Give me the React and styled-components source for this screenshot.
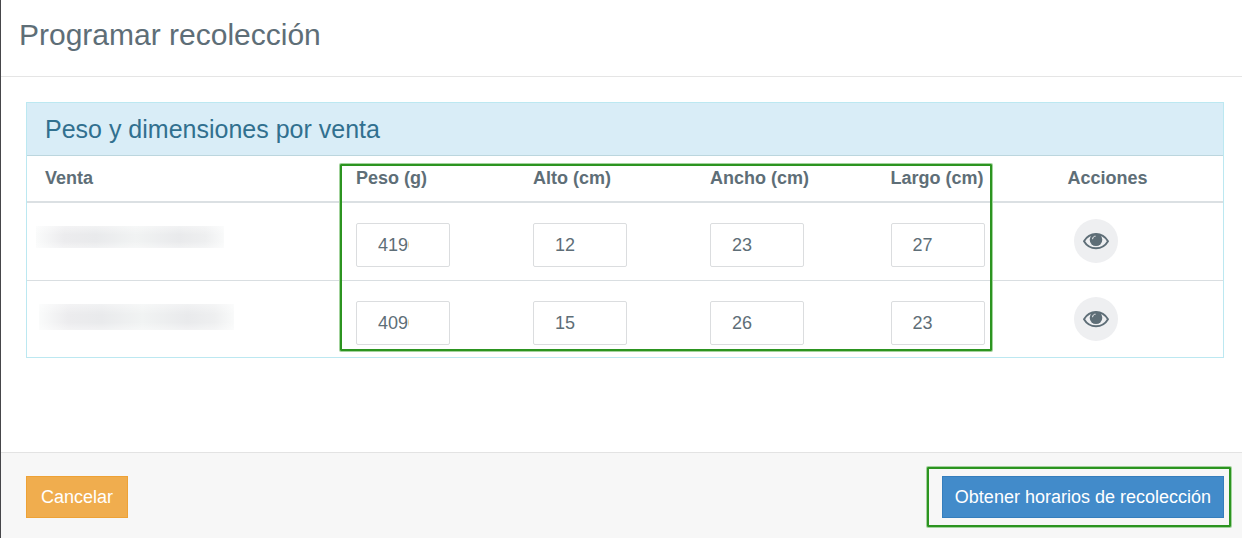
import React, { useState } from 'react';
import styled, { createGlobalStyle } from 'styled-components';

const GlobalStyle = createGlobalStyle`
    * {
        box-sizing: border-box;
    }

    body {
        margin: 0;
        font-family: 'Liberation Sans', Arial, sans-serif;
        font-size: 18px;
        color: #5e6e77;
        background-color: #fff;
    }
`;

const Modal = styled.div`
    display: flex;
    flex-direction: column;
    min-height: 100vh;
    border-left: 1px solid #46464a;
`;

const ModalHeader = styled.header`
    padding: 17px 18px 23px;
    border-bottom: 1px solid #e5e5e5;
`;

const Title = styled.h1`
    margin: 0;
    font-size: 30px;
    font-weight: normal;
    line-height: 36px;
`;

const ModalBody = styled.main`
    flex: 1;
    padding: 25px 18px 25px 25px;
`;

const Panel = styled.section`
    border: 1px solid #bce8f1;
`;

const PanelTitle = styled.h2`
    margin: 0;
    padding: 10px 18px;
    font-size: 25px;
    font-weight: normal;
    line-height: 32px;
    color: #31708f;
    background-color: #d9edf7;
    border-bottom: 1px solid #bcd6de;
`;

const TableArea = styled.div`
    position: relative;
`;

const Table = styled.table`
    width: 100%;
    table-layout: fixed;
    border-spacing: 0;
`;

const HeadCell = styled.th`
    width: ${({ $width }) => $width};
    padding: 10px 0 11px 18px;
    font-weight: bold;
    line-height: 24px;
    text-align: left;
    white-space: nowrap;
    border-bottom: 2px solid #dbe0e3;
`;

const SaleCell = styled.td`
    padding: 23px 9px;
    vertical-align: top;
`;

const InputCell = styled.td`
    padding: 20px 0 12px 18px;
    vertical-align: top;
`;

const ActionCell = styled.td`
    padding: 16px 0 0 24px;
    vertical-align: top;
`;

const Row = styled.tr`
    &:not(:last-child) td {
        height: 78px;
        border-bottom: 1px solid #d9dee1;
    }
`;

const HiddenSale = styled.div`
    width: ${({ $width }) => $width}px;
    height: ${({ $height }) => $height}px;
    margin-left: ${({ $indent }) => $indent}px;
    background:
        linear-gradient(rgba(255, 255, 255, 0.4), transparent 40%, transparent 70%, rgba(255, 255, 255, 0.4)),
        linear-gradient(90deg, #fafbfb, #ececee 15%, #e9eaec 32%, #f1f3f3 53%, #e9eaec 76%, #eeeff0 90%, #f9fafa);
`;

const NumberInput = styled.input`
    display: block;
    width: 94px;
    height: 44px;
    padding: 0 40px 0 21px;
    font-family: inherit;
    font-size: 18px;
    color: inherit;
    background-color: #fff;
    border: 1px solid #dbdddf;
    border-radius: 2px;
    outline: none;
`;

const ViewButton = styled.button`
    display: flex;
    align-items: center;
    justify-content: center;
    width: 44px;
    height: 44px;
    padding: 0;
    color: inherit;
    background-color: #eeeff1;
    border: none;
    border-radius: 50%;
    cursor: pointer;
`;

const Marker = styled.div`
    position: absolute;
    border: 2px solid #2c9420;
    border-radius: 1px;
    box-shadow: 0 0 0 1px #a3d39d;
    pointer-events: none;
`;

const ColumnsMarker = styled(Marker)`
    top: 8px;
    bottom: 6px;
    left: calc(26% + 2px);
    right: calc(19% + 4px);
`;

const ButtonMarker = styled(Marker)`
    top: -9px;
    bottom: -9px;
    left: -15px;
    right: -7px;
`;

const ModalFooter = styled.footer`
    display: flex;
    justify-content: space-between;
    padding: 23px 18px 20px 25px;
    background-color: #f7f7f7;
    border-top: 1px solid #e3e3e3;
`;

const SubmitArea = styled.div`
    position: relative;
`;

const Button = styled.button`
    min-width: 102px;
    height: 42px;
    padding: 0 12px;
    font-family: inherit;
    font-size: 18px;
    color: #fff;
    background-color: ${({ $primary }) => ($primary ? '#428bca' : '#f0ad4e')};
    border: 1px solid ${({ $primary }) => ($primary ? '#357ebd' : '#eea236')};
    cursor: pointer;
`;

const EyeIcon = () => (
    <svg width="26" height="26" viewBox="0 0 26 26" aria-hidden="true">
        <path d="M1 13.2C3.6 8.8 8 6 13 6s9.4 2.800 12 7.200c-2.600 4.400-7 7-12 7S3.600 17.600 1 13.200z" fill="none" stroke="currentColor" strokeWidth="1.900" strokeLinejoin="round" />
        <circle cx="13" cy="11.800" r="6.300" fill="currentColor" />
        <path d="M9.600 10.800c0-1.500 1.100-2.600 2.600-2.600" fill="none" stroke="#eeeff1" strokeWidth="1" strokeLinecap="round" />
    </svg>
);

const campos = [
    { key: 'peso', label: 'Peso (g)', width: '14.8%' },
    { key: 'alto', label: 'Alto (cm)', width: '14.8%' },
    { key: 'ancho', label: 'Ancho (cm)', width: '15.1%' },
    { key: 'largo', label: 'Largo (cm)', width: '14.8%' },
];

const ventasIniciales = [
    { id: 1, peso: '4190', alto: '12', ancho: '23', largo: '27', oculto: { $width: 188, $height: 22, $indent: 0 } },
    { id: 2, peso: '4090', alto: '15', ancho: '26', largo: '23', oculto: { $width: 195, $height: 26, $indent: 3 } },
];

const App = () => {
    const [ventas, setVentas] = useState(ventasIniciales);

    const handleChange = (id, key, value) => {
        setVentas(ventas.map((v) => (v.id === id ? { ...v, [key]: value } : v)));
    };

    return (
        <>
            <GlobalStyle />
            <Modal>
                <ModalHeader>
                    <Title>Programar recolección</Title>
                </ModalHeader>

                <ModalBody>
                    <Panel>
                        <PanelTitle>Peso y dimensiones por venta</PanelTitle>
                        <TableArea>
                            <Table>
                                <thead>
                                    <tr>
                                        <HeadCell $width="26%">Venta</HeadCell>
                                        {campos.map((c) => (
                                            <HeadCell key={c.key} $width={c.width}>{c.label}</HeadCell>
                                        ))}
                                        <HeadCell>Acciones</HeadCell>
                                    </tr>
                                </thead>
                                <tbody>
                                    {ventas.map((v) => (
                                        <Row key={v.id}>
                                            <SaleCell><HiddenSale {...v.oculto} /></SaleCell>
                                            {campos.map((c) => (
                                                <InputCell key={c.key}>
                                                    <NumberInput
                                                        type="text"
                                                        inputMode="numeric"
                                                        aria-label={c.label}
                                                        value={v[c.key]}
                                                        onChange={(e) => handleChange(v.id, c.key, e.target.value)}
                                                    />
                                                </InputCell>
                                            ))}
                                            <ActionCell>
                                                <ViewButton type="button" aria-label="Ver venta"><EyeIcon /></ViewButton>
                                            </ActionCell>
                                        </Row>
                                    ))}
                                </tbody>
                            </Table>
                            <ColumnsMarker />
                        </TableArea>
                    </Panel>
                </ModalBody>

                <ModalFooter>
                    <Button type="button">Cancelar</Button>
                    <SubmitArea>
                        <Button type="button" $primary>Obtener horarios de recolección</Button>
                        <ButtonMarker />
                    </SubmitArea>
                </ModalFooter>
            </Modal>
        </>
    );
};

export default App;
